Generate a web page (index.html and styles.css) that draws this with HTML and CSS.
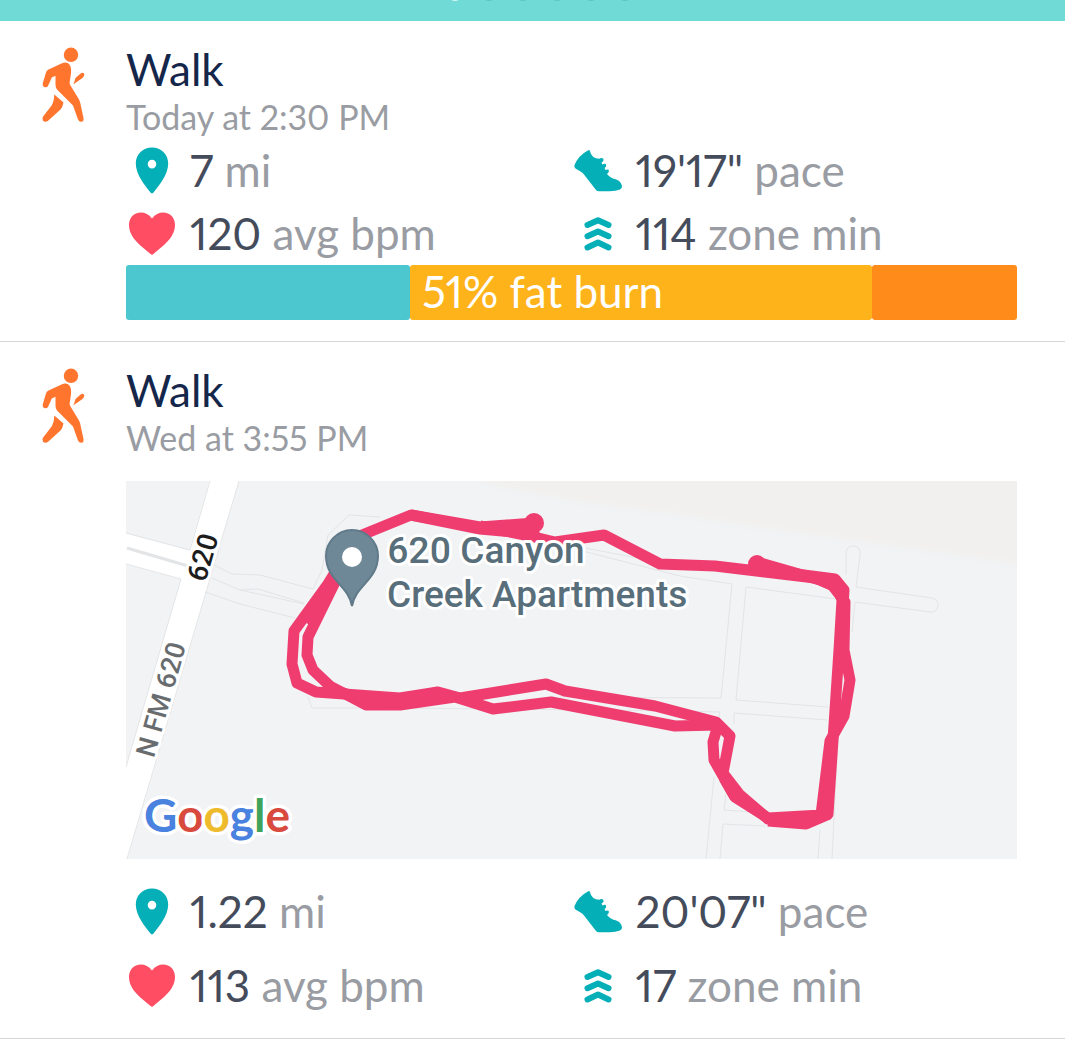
FILE: index.html
```
<!DOCTYPE html>
<html lang="en">
<head>
<meta charset="utf-8">
<meta name="viewport" content="width=device-width, initial-scale=1">
<title>Exercise</title>
<link rel="stylesheet" href="styles.css">
</head>
<body>
<svg class="defs" aria-hidden="true">
  <symbol id="walk" viewBox="0 0 44 76">
    <circle cx="30" cy="7.800" r="7.200"/>
    <path d="M20.500 16.400Q27 13.500 29.500 19.500C30.800 23 29.800 29 28.600 35.500Q28.500 37 29.500 38.500L38 52.500Q39 54.500 39.500 57L42.500 71Q43 74.500 40.500 74.800Q38 75 37 72.500L32 58.500L16 42.500Q14.300 40.500 14.500 37V28.800L10.800 30.500L7 39Q5.500 41 3.300 40Q1.200 39 1.700 36.500L5 25.500Q5.500 23.500 7.500 22.500Z"/>
    <path d="M13.300 47.500L22.500 55.500Q21.700 60 19.500 62.500L6.800 74Q4 75.700 2 73.700Q.3 71.500 2.300 69.300L11 58Q13.300 54 13.300 47.500Z"/>
    <path d="M32.500 37.200L34.500 31L39 27Q42 24.500 43.200 27Q43.700 29 41.500 31Z"/>
  </symbol>
  <symbol id="pin" viewBox="0 0 52 48" overflow="visible">
    <path fill-rule="evenodd" d="M26 3.500C16.500 3.500 9.800 10.500 9.800 19.500C9.800 30.500 19 41.500 24.500 48.500Q26 50.200 27.500 48.500C33 41.500 42.200 30.500 42.200 19.500C42.200 10.500 35.500 3.500 26 3.500ZM26 15.800A4.300 4.300 0 1 1 26 24.400A4.300 4.300 0 1 1 26 15.800Z"/>
  </symbol>
  <symbol id="heart" viewBox="0 0 52 48" overflow="visible">
    <path d="M26 11.500C23 7.500 19 5.600 14.800 5.600C8 5.600 3 11 3 17.800C3 31.500 16.500 40 24.500 47Q26 48.300 27.500 47C35.500 40 49 31.500 49 17.800C49 11 44 5.600 37.200 5.600C33 5.600 29 7.500 26 11.500Z"/>
  </symbol>
  <symbol id="shoe" viewBox="0 0 52 48" overflow="visible">
    <path d="M15.800 6.500Q17.500 5.300 17.900 7Q19.500 14.500 27.500 14.800Q28 14.300 29.500 14Q31.700 14 31.600 16Q31.400 17.700 29.500 18.500L30.500 20.500Q34 18.900 34.200 21.200Q34.500 23 32.500 24L33.500 26Q36.700 24.700 36.900 26.900Q37 28.500 35 30Q38 34 43.500 35.200Q49 36.800 50 42Q50.300 44.500 48 45.500Q43.500 47.400 37 47.300H27Q25 47.300 24 46L12 30.500Q10.500 28.500 8.500 27.500L3.500 24.500Q1.700 23.300 2.500 21Q6.500 11.500 15.800 6.500Z"/>
  </symbol>
  <symbol id="zone" viewBox="0 0 52 48" overflow="visible">
    <path fill="none" stroke="currentColor" stroke-width="6" stroke-linecap="round" stroke-linejoin="round" d="M15.500 18L26 13.200L36.500 18M15.500 29.200L26 24.400L36.500 29.200M15.500 40.400L26 35.600L36.500 40.400"/>
  </symbol>
</svg>

<header class="summary">
  <span class="dot dot-active"></span><span class="dot"></span><span class="dot"></span><span class="dot"></span><span class="dot"></span><span class="dot"></span>
</header>

<main>
  <article class="activity">
    <svg class="activity-icon" aria-hidden="true"><use href="#walk"/></svg>
    <div class="activity-body">
      <h2 class="title">Walk</h2>
      <p class="time">Today at 2:30 PM</p>
      <ul class="stats">
        <li class="stat"><svg class="stat-icon"><use href="#pin"/></svg><span><b class="value">7</b> mi</span></li>
        <li class="stat"><svg class="stat-icon"><use href="#shoe"/></svg><span><b class="value">19'17"</b> pace</span></li>
        <li class="stat"><svg class="stat-icon heart"><use href="#heart"/></svg><span><b class="value">120</b> avg bpm</span></li>
        <li class="stat"><svg class="stat-icon"><use href="#zone"/></svg><span><b class="value">114</b> zone min</span></li>
      </ul>
      <div class="zones">
        <div class="zone zone-light" style="flex-grow:284"></div>
        <div class="zone zone-fat" style="flex-grow:462"><span class="zone-label">51% fat burn</span></div>
        <div class="zone zone-cardio" style="flex-grow:145"></div>
      </div>
    </div>
  </article>

  <article class="activity activity-mapped">
    <svg class="activity-icon" aria-hidden="true"><use href="#walk"/></svg>
    <div class="activity-body">
      <h2 class="title">Walk</h2>
      <p class="time">Wed at 3:55 PM</p>
      <svg class="map" viewBox="126 481 891 378" role="img" aria-label="Route map">
        <defs><filter id="soft"><feGaussianBlur stdDeviation="4"/></filter></defs>
        <path class="hill" filter="url(#soft)" d="M430 465C520 500 640 508 700 518C800 535 900 545 1030 566V465Z"/>
        <g class="road-main">
          <path d="M120 532L192 551L184 580L120 563Z"/>
          <path d="M210 479H240L127 861H120V787Z"/>
        </g>
        <g class="road-edge">
          <path d="M210 481L190 550L126 533M126 564L181 579L126 767M239 481L127 859M205 592L240 604L295 618M212 564L232 574L260 575L313 589L322 570L328 535L349 515L380 517M212 578L240 590L258 589L304 603M240 590L304 604M308 697L312 708H400L680 711L720 712L714 740M540 540L680 576L732 584L721 698L560 697M585 548L680 566M746 587L836 599M746 587L736 700L828 707M734 724V713L827 720M846 575V552Q848 545 854 546Q861 547 860 555L856 587L932 598Q939 600 938 606Q936 613 930 612L855 602L852 632M714 777L706 859M728 777L724 810L752 812M720 859L723 824L765 826M820 830L818 859M838 738L832 859"/>
          <path stroke-width="3" d="M127 548L188 566"/>
        </g>
        <g class="route">
          <path d="M534 523L480 527L411 515L357 537L328 584L294 631L292 664L297 683L316 692L400 698L438 692L460 698L546 684L565 691L655 706L716 722L730 736L723 773L740 795L768 819L806 822L828 814L833 740L839 650L842 600L838 588L820 580L757 562"/>
          <path d="M480 526L530 536L555 542L604 535L660 564L715 566L815 578L832 585L845 602L844 650L850 680L844 716L830 741L821 815L768 818L735 797L714 760L713 742L718 725L675 726L551 702L493 709L455 697L400 705H366L330 686L313 670L307 655L308 637L338 576"/>
          <path d="M411 515L480 529L534 534V523M757 569L835 579L844 590L843 606M768 821L806 824L827 815L832 742M340 692L366 700L400 701L438 692M735 797L724 778M690 719L716 724M332 582L308 624"/>
        </g>
        <circle class="route-end" cx="534" cy="523" r="10"/>
        <circle class="route-end" cx="757" cy="564" r="9"/>
        <path class="place-pin" d="M352 606C349 586 326 580 326 556A26 26 0 0 1 378 556C378 580 355 586 352 606Z"/>
        <circle cx="352" cy="557" r="10" fill="#fff"/>
        <text class="place" x="387" y="563">620 Canyon</text>
        <text class="place" x="387" y="607">Creek Apartments</text>
        <text class="road-number" text-anchor="middle" transform="translate(212 560) rotate(-74)">620</text>
        <text class="road-name" text-anchor="middle" transform="translate(170 702) rotate(-74)">N FM 620</text>
        <text class="google" x="144" y="832"><tspan fill="#4a82e0">G</tspan><tspan fill="#d84a3e">o</tspan><tspan fill="#edbb2c">o</tspan><tspan fill="#4a82e0">g</tspan><tspan fill="#3fa35a">l</tspan><tspan fill="#d84a3e">e</tspan></text>
      </svg>
      <ul class="stats">
        <li class="stat"><svg class="stat-icon"><use href="#pin"/></svg><span><b class="value">1.22</b> mi</span></li>
        <li class="stat"><svg class="stat-icon"><use href="#shoe"/></svg><span><b class="value">20'07"</b> pace</span></li>
        <li class="stat"><svg class="stat-icon heart"><use href="#heart"/></svg><span><b class="value">113</b> avg bpm</span></li>
        <li class="stat"><svg class="stat-icon"><use href="#zone"/></svg><span><b class="value">17</b> zone min</span></li>
      </ul>
    </div>
  </article>
</main>
</body>
</html>
```
FILE: styles.css
```
* {
  box-sizing: border-box;
}

body {
  margin: 0;
  background: #fff;
  color: #999ca2;
  font-family: Lato, "Liberation Sans", sans-serif;
  font-variant-numeric: proportional-nums;
}

.defs {
  display: block;
  width: 0;
  height: 0;
}

.summary {
  display: flex;
  justify-content: center;
  gap: 20px;
  height: 21px;
  padding-left: 15px;
  overflow: hidden;
  background: #70dbd6;
}

.dot {
  width: 14px;
  height: 14px;
  margin-top: -13px;
  border-radius: 50%;
  background: #5bc5c4;
}

.dot-active {
  background: #d5f5f2;
}

.activity {
  display: flex;
  padding: 22px 48px 21px 41px;
  border-bottom: 1px solid #d5d6d8;
}

.activity-mapped {
  padding-bottom: 27px;
}

.activity-icon {
  flex: none;
  width: 44px;
  height: 76px;
  margin: 4px 41px 0 0;
  fill: #ff752e;
}

.activity-body {
  flex: 1;
  min-width: 0;
}

.title {
  margin: 0 0 2px;
  color: #14274a;
  font-size: 44px;
  font-weight: 400;
  line-height: 52px;
}

.time {
  margin: 0;
  font-size: 34px;
  line-height: 40px;
}

.stats {
  display: grid;
  grid-template-columns: 1fr 1fr;
  row-gap: 11px;
  margin: 7px 0 6px;
  padding: 0;
  list-style: none;
}

.stat {
  display: flex;
  gap: 12px;
  font-size: 44px;
  line-height: 52px;
  white-space: nowrap;
}

.stat-icon {
  flex: none;
  width: 52px;
  height: 48px;
  overflow: visible;
  color: #04afb7;
  fill: #04afb7;
}

.heart {
  fill: #ff4e63;
}

.value {
  color: #444c5c;
  font-weight: 400;
}

.zones {
  display: flex;
}

.zone {
  flex: 0 0 0;
  min-width: 0;
  height: 55px;
  border-radius: 3px;
  color: #fff;
  font-size: 44px;
  line-height: 52px;
  white-space: nowrap;
}

.zone-label {
  padding-left: 12px;
}

.zone-light {
  background: #4dc7cf;
}

.zone-fat {
  background: #ffb31b;
}

.zone-cardio {
  background: #ff8b1a;
}

.map {
  display: block;
  width: 100%;
  height: auto;
  margin-top: 23px;
  background: #f1f3f5;
}

.activity-mapped .stats {
  row-gap: 22px;
  margin: 26px 0 0;
}

.hill {
  fill: #f2f0ee;
}

.road-main {
  fill: #fff;
}

.road-edge {
  fill: none;
  stroke: #e2e4e6;
  stroke-width: 1;
}

.route {
  fill: none;
  stroke: #ef3d70;
  stroke-width: 11;
  stroke-linejoin: round;
}

.route-end {
  fill: #ef3d70;
}

.place-pin {
  fill: #6f8898;
  stroke: #617a8a;
  stroke-width: 2;
}

.place,
.road-number,
.road-name {
  font-family: Roboto, sans-serif;
  font-weight: 500;
  stroke: #fff;
  stroke-width: 6;
  stroke-linejoin: round;
  paint-order: stroke;
}

.place {
  fill: #586f7b;
  font-size: 37px;
}

.road-number {
  fill: #1d1d1d;
  font-size: 28px;
}

.road-name {
  fill: #686c6f;
  font-size: 27px;
}

.google {
  font-family: Lato, sans-serif;
  font-size: 46px;
  font-weight: 700;
  stroke: #fff;
  stroke-width: 7;
  stroke-linejoin: round;
  paint-order: stroke;
}
```
